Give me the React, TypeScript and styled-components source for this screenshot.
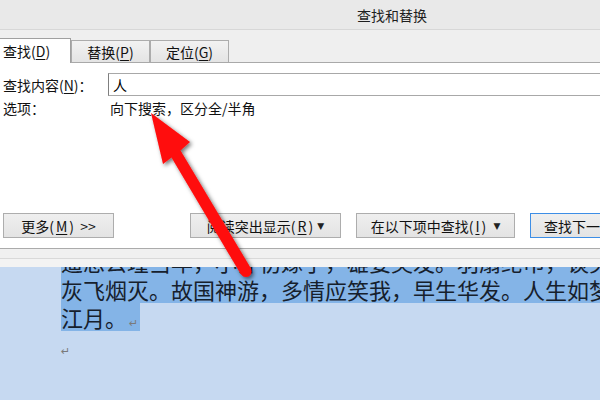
import styled, { createGlobalStyle } from "styled-components";

const GlobalStyle = createGlobalStyle`
  *, *::before, *::after {
    box-sizing: border-box;
  }
  html, body {
    margin: 0;
    padding: 0;
    width: 600px;
    height: 400px;
    overflow: hidden;
    background: #ffffff;
  }
  body {
    font-family: "Noto Sans CJK SC", "Liberation Sans", sans-serif;
  }
`;

const Page = styled.div`
  position: relative;
  width: 600px;
  height: 400px;
  display: flex;
  flex-direction: column;
  overflow: hidden;
`;

const TitleBar = styled.div`
  height: 30px;
  flex-shrink: 0;
  background: #e9e9e9;
  border-bottom: 1px solid #d7d7d7;
  display: flex;
  align-items: center;
  padding-left: 357px;
  font-size: 14px;
  color: #1e1e1e;
`;

const TabStrip = styled.div`
  height: 33px;
  flex-shrink: 0;
  background: #efefef;
  border-bottom: 1px solid #a9a9a9;
  display: flex;
  align-items: flex-end;
`;

const Tab = styled.div<{ $active?: boolean; $width: number }>`
  width: ${(p) => p.$width}px;
  height: ${(p) => (p.$active ? 25 : 22)}px;
  margin-bottom: ${(p) => (p.$active ? -1 : 0)}px;
  position: relative;
  z-index: ${(p) => (p.$active ? 1 : 0)};
  background: ${(p) =>
    p.$active ? "#ffffff" : "linear-gradient(#f2f2f2, #e4e4e4)"};
  border: 1px solid ${(p) => (p.$active ? "#a0a0a0" : "#acacac")};
  border-bottom: none;
  border-left: ${(p) => (p.$active ? "none" : "1px solid #acacac")};
  display: flex;
  align-items: center;
  justify-content: ${(p) => (p.$active ? "flex-start" : "center")};
  padding-left: ${(p) => (p.$active ? 3 : 0)}px;
  font-size: 14px;
  line-height: 20px;
  color: #111;
`;

const Key = styled.span`
  text-decoration: underline;
  text-underline-offset: 2px;
`;

const Panel = styled.div`
  height: 185px;
  flex-shrink: 0;
  background: #ffffff;
  display: flex;
  flex-direction: column;
  padding: 10px 0 10px 0;
`;

const FieldRow = styled.div`
  display: flex;
  align-items: center;
  height: 23px;
`;

const Label = styled.div<{ $width: number }>`
  width: ${(p) => p.$width}px;
  flex-shrink: 0;
  padding-left: 3px;
  font-size: 14px;
  color: #111;
  white-space: nowrap;
`;

const TextBox = styled.div`
  flex: 1;
  height: 23px;
  margin-right: -20px;
  border: 1px solid #a8a8a8;
  border-left-color: #7f7f7f;
  display: flex;
  align-items: center;
  padding-left: 4px;
  font-size: 14px;
  color: #000;
`;

const OptionRow = styled.div`
  display: flex;
  align-items: center;
  height: 18px;
  margin-top: 3px;
  font-size: 14px;
  color: #111;
`;

const ButtonRow = styled.div`
  margin-top: auto;
  display: flex;
  align-items: center;
  padding-left: 3px;
  white-space: nowrap;
`;

const Button = styled.div<{ $width: number; $before?: number; $primary?: boolean }>`
  width: ${(p) => p.$width}px;
  flex-shrink: 0;
  height: 25px;
  margin-left: ${(p) => p.$before ?? 0}px;
  border: 1px solid ${(p) => (p.$primary ? "#3d8ee6" : "#adadad")};
  background: linear-gradient(#efefef, #e3e3e3);
  display: flex;
  align-items: center;
  justify-content: ${(p) => (p.$primary ? "flex-start" : "center")};
  padding-left: ${(p) => (p.$primary ? 13 : 0)}px;
  font-size: 14px;
  color: #111;
  gap: 2px;
`;

const Caret = styled.span`
  font-size: 9px;
  color: #222;
  margin-left: 2px;
  font-family: "DejaVu Sans", sans-serif;
`;

const Divider = styled.div`
  flex-shrink: 0;
  border-top: 1px solid #ababab;
  height: 19px;
  background: #f0f0f0;
  display: flex;
  flex-direction: column;
`;

const DividerInner = styled.div`
  margin-top: 9px;
  border-top: 1px solid #d9d9d9;
  flex: 1;
  background: #f3f3f3;
`;

const Document = styled.div`
  flex: 1;
  background: #c6d9f1;
  overflow: hidden;
  padding-left: 61px;
`;

const Lines = styled.div`
  margin-top: -20px;
`;

const Line = styled.div<{ $selected?: boolean }>`
  height: 28px;
  line-height: 28px;
  font-size: 22px;
  white-space: nowrap;
  color: #16202c;
  background: ${(p) => (p.$selected ? "#84b4e7" : "transparent")};
`;

const Sel = styled.span`
  display: inline-block;
  height: 28px;
  background: #84b4e7;
  padding-right: 2px;
`;

const Mark = styled.span<{ $gap?: number }>`
  font-family: "DejaVu Sans", sans-serif;
  font-size: 11px;
  color: #7a7a7a;
  margin-left: ${(p) => p.$gap ?? 0}px;
`;

const Overlay = styled.svg`
  position: absolute;
  left: 0;
  top: 0;
  pointer-events: none;
`;

function Arrow() {
  return (
    <Overlay width={600} height={400} viewBox="0 0 600 400">
      <defs>
        <filter id="shadow" x="-20%" y="-20%" width="140%" height="140%">
          <feDropShadow dx="2" dy="2" stdDeviation="2" floodColor="#000" floodOpacity="0.55" />
        </filter>
      </defs>
      <g filter="url(#shadow)">
        <polygon
          points="151,113 190,142 180.5,150.5 251,268.5 241,274.5 171.5,157.5 163,164"
          fill="#ff0a0a"
        />
        <circle cx="246" cy="271.5" r="5.5" fill="#ff0a0a" />
      </g>
    </Overlay>
  );
}

export default function App() {
  return (
    <Page>
      <GlobalStyle />
      <TitleBar>查找和替换</TitleBar>
      <TabStrip>
        <Tab $active $width={71}>
          查找(<Key>D</Key>)
        </Tab>
        <Tab $width={79}>
          替换(<Key>P</Key>)
        </Tab>
        <Tab $width={79}>
          定位(<Key>G</Key>)
        </Tab>
      </TabStrip>
      <Panel>
        <FieldRow>
          <Label $width={108}>
            查找内容(<Key>N</Key>)：
          </Label>
          <TextBox>人</TextBox>
        </FieldRow>
        <OptionRow>
          <Label $width={110}>选项：</Label>
          向下搜索，区分全/半角
        </OptionRow>
        <ButtonRow>
          <Button $width={111}>
            更多(<Key>M</Key>)&nbsp;&nbsp;&gt;&gt;
          </Button>
          <Button $width={151} $before={76}>
            阅读突出显示(<Key>R</Key>)<Caret>▼</Caret>
          </Button>
          <Button $width={159} $before={15}>
            在以下项中查找(<Key>I</Key>)&nbsp;<Caret>▼</Caret>
          </Button>
          <Button $width={110} $before={15} $primary>
            查找下一处(<Key>F</Key>)
          </Button>
        </ButtonRow>
      </Panel>
      <Divider>
        <DividerInner />
      </Divider>
      <Document>
        <Lines>
          <Line $selected>遥想公瑾当年，小乔初嫁了，雄姿英发。羽扇纶巾，谈笑间，樯橹</Line>
          <Line $selected>灰飞烟灭。故国神游，多情应笑我，早生华发。人生如梦，一尊还酹</Line>
          <Line>
            <Sel>
              江月。<Mark $gap={2}>↵</Mark>
            </Sel>
          </Line>
          <Line>
            <Mark>↵</Mark>
          </Line>
        </Lines>
      </Document>
      <Arrow />
    </Page>
  );
}
